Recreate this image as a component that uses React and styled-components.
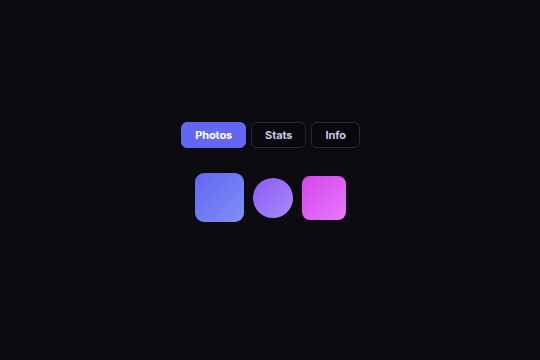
import React, { useState } from "react";
import styled, { createGlobalStyle } from "styled-components";

const GlobalStyle = createGlobalStyle`
  html, body {
    margin: 0;
    padding: 0;
    background: #0b0b10;
    font-family: Inter, "Liberation Sans", Arial, sans-serif;
  }
  * {
    box-sizing: border-box;
  }
`;

const Page = styled.div`
  min-height: 100vh;
  display: flex;
  flex-direction: column;
  align-items: center;
  justify-content: center;
  gap: 25px;
  padding-bottom: 16px;
  padding-left: 1px;
`;

const TabBar = styled.div`
  display: flex;
  gap: 5px;
`;

const Tab = styled.button`
  height: 26px;
  padding: 0 13px;
  border-radius: 6px;
  border: 1px solid ${(p) => (p.$active ? "#6366f1" : "#29283a")};
  background: ${(p) => (p.$active ? "#6366f1" : "#08080d")};
  color: ${(p) => (p.$active ? "#ffffff" : "#c9c9e4")};
  font-family: inherit;
  font-size: 11px;
  font-weight: 700;
  letter-spacing: -0.1px;
  cursor: pointer;
`;

const ShapeRow = styled.div`
  display: flex;
  align-items: center;
  gap: 9px;
`;

const Shape = styled.div`
  width: ${(p) => p.$size}px;
  height: ${(p) => p.$size}px;
  border-radius: ${(p) => p.$radius};
  background: linear-gradient(135deg, ${(p) => p.$from}, ${(p) => p.$to});
`;

const tabs = ["Photos", "Stats", "Info"];

const shapes = [
  { size: 49, radius: "9px", from: "#6366f1", to: "#7f8ffa" },
  { size: 40, radius: "50%", from: "#8b5cf6", to: "#a889fb" },
  { size: 44, radius: "8px", from: "#d445ee", to: "#e77af9" },
];

export default function App() {
  const [active, setActive] = useState("Photos");
  return (
    <>
      <GlobalStyle />
      <Page>
        <TabBar>
          {tabs.map((t) => (
            <Tab key={t} $active={active === t} onClick={() => setActive(t)}>
              {t}
            </Tab>
          ))}
        </TabBar>
        <ShapeRow>
          {shapes.map((s, i) => (
            <Shape
              key={i}
              $size={s.size}
              $radius={s.radius}
              $from={s.from}
              $to={s.to}
            />
          ))}
        </ShapeRow>
      </Page>
    </>
  );
}
